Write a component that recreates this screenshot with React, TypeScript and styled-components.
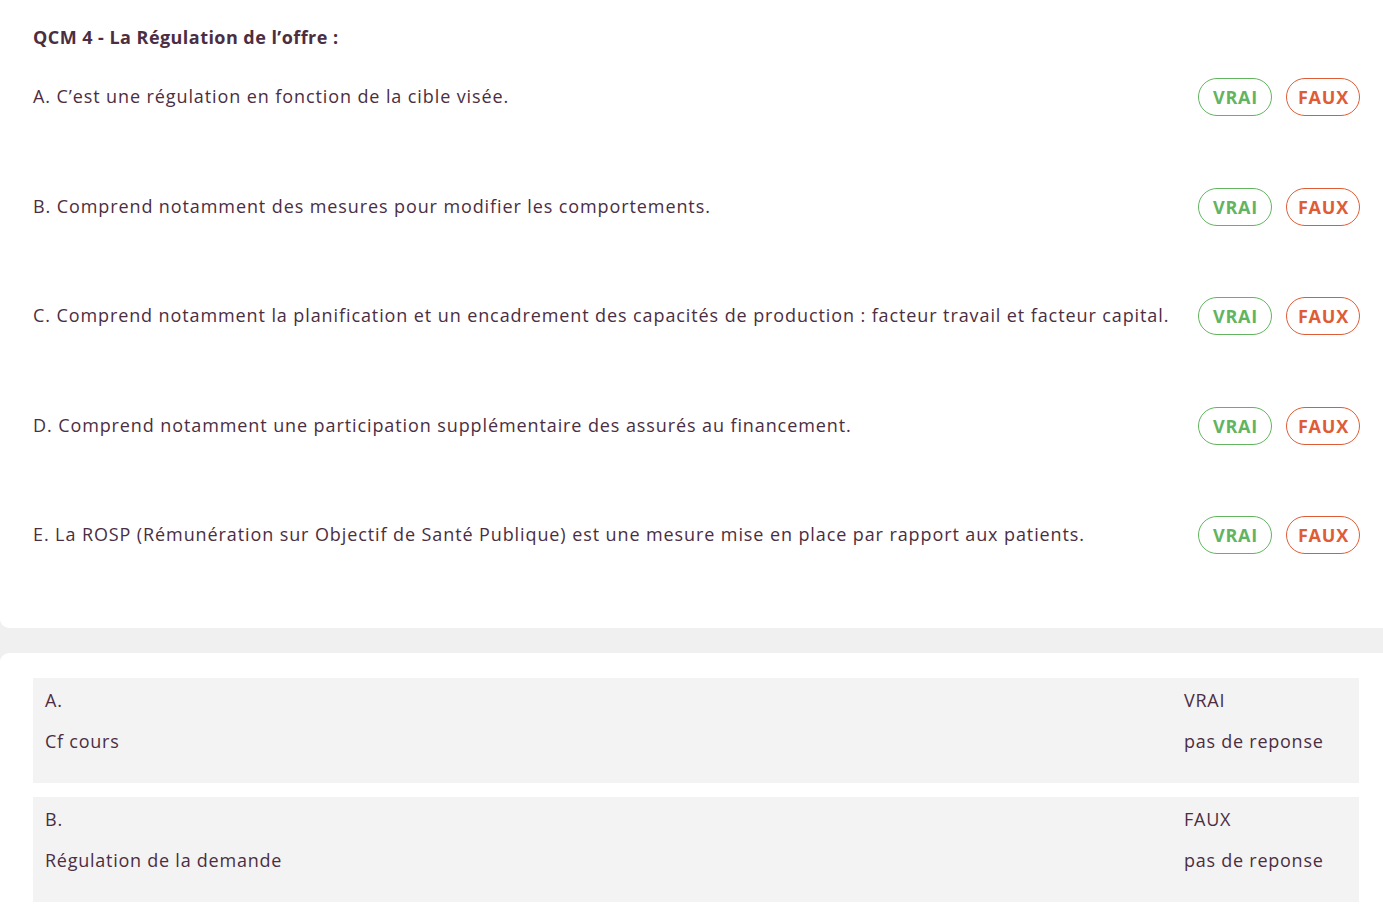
import styled, { createGlobalStyle } from "styled-components";

const GlobalStyle = createGlobalStyle`
  html, body {
    margin: 0;
    padding: 0;
    background: #f0f0f0;
    overflow: hidden;
  }
  body {
    font-family: "Open Sans", "Noto Sans", sans-serif;
    color: #4b2e42;
  }
`;

const questions = [
  "A. C’est une régulation en fonction de la cible visée.",
  "B. Comprend notamment des mesures pour modifier les comportements.",
  "C. Comprend notamment la planification et un encadrement des capacités de production : facteur travail et facteur capital.",
  "D. Comprend notamment une participation supplémentaire des assurés au financement.",
  "E. La ROSP (Rémunération sur Objectif de Santé Publique) est une mesure mise en place par rapport aux patients.",
];

const corrections = [
  { letter: "A.", answer: "VRAI", comment: "Cf cours", status: "pas de reponse" },
  { letter: "B.", answer: "FAUX", comment: "Régulation de la demande", status: "pas de reponse" },
];

export default function App() {
  return (
    <>
      <GlobalStyle />
      <Page>
        <QuestionCard>
          <Title>QCM 4 - La Régulation de l’offre :</Title>
          <List>
            {questions.map((q) => (
              <Row key={q}>
                <Statement>{q}</Statement>
                <Buttons>
                  <Choice tone="#62b45f">VRAI</Choice>
                  <Choice tone="#de5d36">FAUX</Choice>
                </Buttons>
              </Row>
            ))}
          </List>
        </QuestionCard>
        <CorrectionCard>
          {corrections.map((c) => (
            <Correction key={c.letter}>
              <Left>
                <Line>{c.letter}</Line>
                <Line>{c.comment}</Line>
              </Left>
              <Right>
                <Line>{c.answer}</Line>
                <Line>{c.status}</Line>
              </Right>
            </Correction>
          ))}
        </CorrectionCard>
      </Page>
    </>
  );
}

const Page = styled.div`
  display: flex;
  flex-direction: column;
  gap: 25px;
  width: 1383px;
`;

const QuestionCard = styled.section`
  background: #ffffff;
  border-radius: 0 0 0 9px;
  padding: 26px 23px 74px 33px;
`;

const Title = styled.h2`
  margin: 0;
  font-size: 18px;
  line-height: 22px;
  font-weight: 700;
  letter-spacing: 0.45px;
`;

const List = styled.div`
  display: flex;
  flex-direction: column;
  gap: 71.5px;
  margin-top: 30px;
`;

const Row = styled.div`
  display: flex;
  align-items: center;
  justify-content: space-between;
  height: 38px;
`;

const Statement = styled.p`
  margin: 0;
  font-size: 18px;
  line-height: 22px;
  font-weight: 500;
  letter-spacing: 0.9px;
  margin-top: -2px;
`;

const Buttons = styled.div`
  display: flex;
  gap: 14px;
`;

const Choice = styled.button<{ tone: string }>`
  box-sizing: border-box;
  width: 74px;
  height: 38px;
  border-radius: 19px;
  border: 1.5px solid ${(p) => p.tone};
  background: #ffffff;
  color: ${(p) => p.tone};
  font-family: "Open Sans", "Noto Sans", sans-serif;
  font-size: 18px;
  font-weight: 700;
  letter-spacing: 0.8px;
  padding: 0 0 0 1px;
  cursor: pointer;
`;

const CorrectionCard = styled.section`
  background: #ffffff;
  border-radius: 9px 0 0 0;
  padding: 25px 24px 0 33px;
  display: flex;
  flex-direction: column;
  gap: 14px;
  min-height: 300px;
`;

const Correction = styled.div`
  background: #f3f3f3;
  height: 105px;
  padding: 11px 12px 0 12px;
  box-sizing: border-box;
  display: flex;
  justify-content: space-between;
`;

const Left = styled.div`
  display: flex;
  flex-direction: column;
  gap: 19px;
`;

const Right = styled.div`
  display: flex;
  flex-direction: column;
  gap: 19px;
  width: 163px;
`;

const Line = styled.div`
  font-size: 18px;
  line-height: 22px;
  font-weight: 500;
  letter-spacing: 0.75px;
`;
